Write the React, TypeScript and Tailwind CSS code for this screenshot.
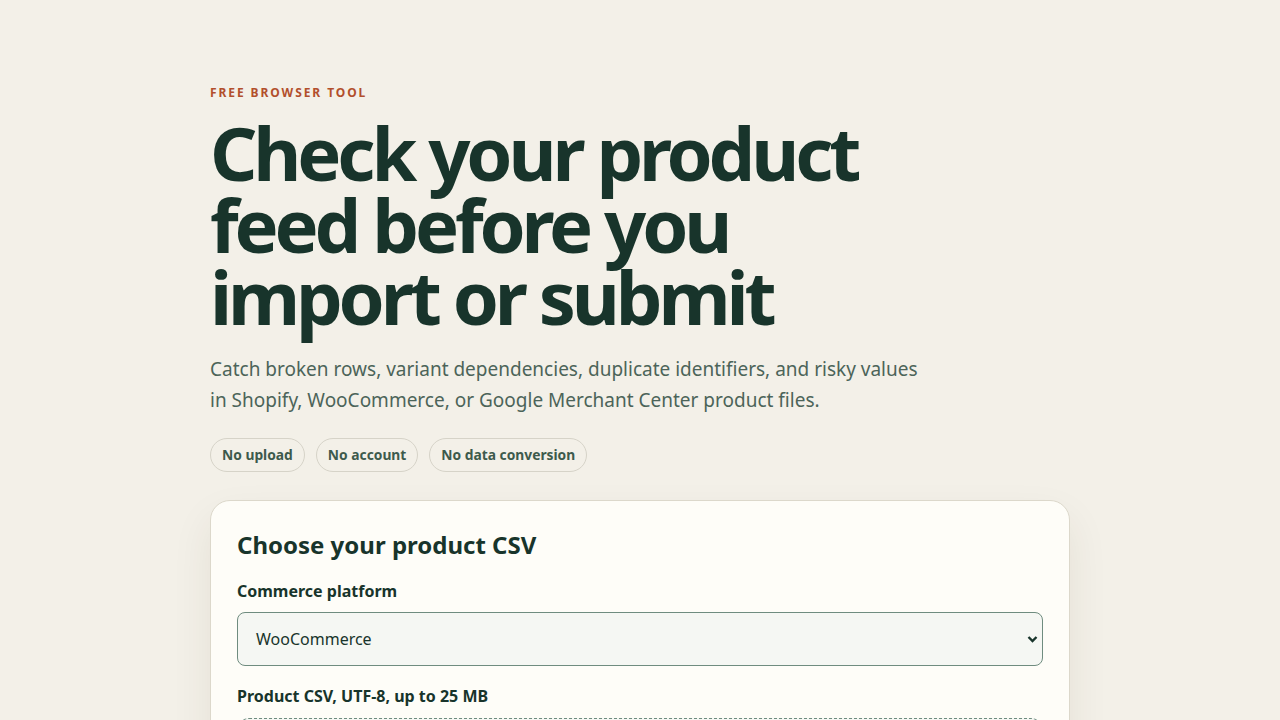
import React from "react";

export default function App() {
  return (
    <div
      className="min-h-screen bg-[#f3f0e8] text-[#18342b]"
      style={{ fontFamily: '"Noto Sans", "Open Sans", sans-serif' }}
    >
      <main className="mx-auto w-[860px] pt-[85px]">
        <p className="text-[12px] font-bold uppercase tracking-[0.16em] text-[#b24f2c] leading-4">
          Free browser tool
        </p>
        <h1 className="mt-[16px] max-w-[700px] text-[74px] font-bold leading-[72px] tracking-[-0.056em] text-[#18342b]">
          Check your product feed before you import or submit
        </h1>
        <p className="mt-[21px] max-w-[720px] text-[19px] leading-[31px] text-[#4c6459]">
          Catch broken rows, variant dependencies, duplicate identifiers, and risky values in Shopify, WooCommerce, or Google Merchant Center product files.
        </p>
        <div className="mt-[22px] flex gap-[11px]">
          {["No upload", "No account", "No data conversion"].map((t) => (
            <span
              key={t}
              className="rounded-full border border-[#d6d3c8] px-[11px] py-[6px] text-[13.8px] font-bold leading-[20px] text-[#3d5a4c]"
            >
              {t}
            </span>
          ))}
        </div>
        <section className="mt-[28px] rounded-[20px] border border-[#dcd8cb] bg-[#fefdf8] px-[26px] pt-[26px] pb-[40px] shadow-[0_18px_40px_rgba(60,50,20,0.08)]">
          <h2 className="text-[24px] font-bold leading-[36px] text-[#18342b]">
            Choose your product CSV
          </h2>
          <label className="mt-[16px] block text-[16px] font-bold leading-[24px] text-[#18342b]">
            Commerce platform
          </label>
          <div className="relative mt-[9px] flex h-[54px] items-center rounded-[8px] border border-[#6f8c7f] bg-[#f5f7f3] pl-[18px] text-[16px] text-[#18342b]">
            WooCommerce
            <svg
              className="absolute right-[4px] top-1/2 -translate-y-1/2"
              width="11"
              height="8"
              viewBox="0 0 11 8"
            >
              <path d="M1.5 2 L5.5 6 L9.5 2" stroke="#18342b" strokeWidth="2.4" fill="none" />
            </svg>
          </div>
          <label className="mt-[18px] block text-[16px] font-bold leading-[24px] text-[#18342b]">
            Product CSV, UTF-8, up to 25 MB
          </label>
          <div className="mt-[10px] h-[160px] rounded-[12px] border border-dashed border-[#6f8c7f] bg-[#f5f7f3]" />
        </section>
      </main>
    </div>
  );
}
